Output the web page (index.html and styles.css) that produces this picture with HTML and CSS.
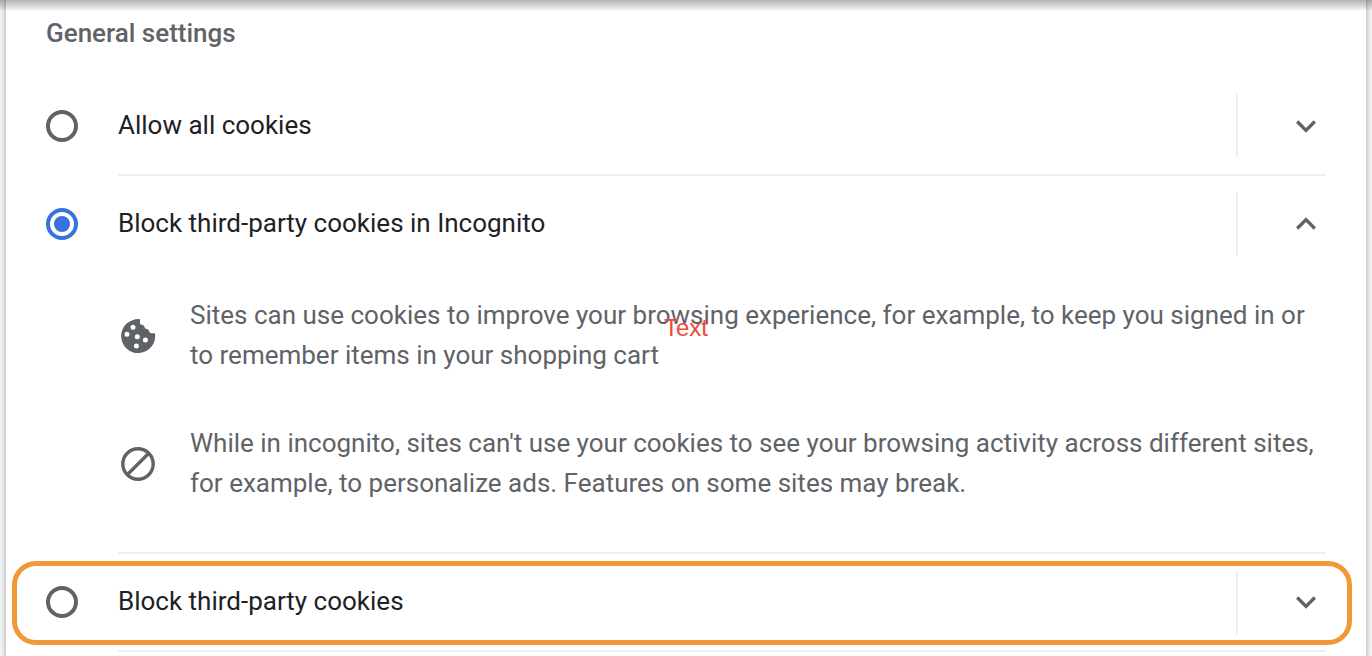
FILE: index.html
```html
<!DOCTYPE html>
<html lang="en">
<head>
<meta charset="utf-8">
<title>Cookie settings</title>
<link rel="stylesheet" href="styles.css">
</head>
<body>
<div class="scroll-shadow"></div>
<main class="card">
  <h2 class="title">General settings</h2>
  <div class="options" role="radiogroup" aria-label="General settings">
    <section class="option">
      <input class="radio" type="radio" name="cookies" id="allow">
      <div class="body">
        <div class="head">
          <label class="label" for="allow">Allow all cookies</label>
          <button class="toggle" type="button" aria-label="Expand Allow all cookies" aria-expanded="false">
            <svg class="icon" viewBox="0 0 24 24"><path d="M16.59 8.59 12 13.17 7.41 8.59 6 10l6 6 6-6z"/></svg>
          </button>
        </div>
      </div>
    </section>
    <section class="option">
      <input class="radio" type="radio" name="cookies" id="incognito" checked>
      <div class="body">
        <div class="head">
          <label class="label" for="incognito">Block third-party cookies in Incognito</label>
          <button class="toggle" type="button" aria-label="Collapse Block third-party cookies in Incognito" aria-expanded="true">
            <svg class="icon" viewBox="0 0 24 24"><path d="M12 8l-6 6 1.41 1.41L12 10.83l4.59 4.58L18 14z"/></svg>
          </button>
        </div>
        <div class="details">
          <div class="detail">
            <svg class="icon" viewBox="0 0 40 40"><path fill-rule="evenodd" d="M22 3.2A17 17 0 1 0 36.9 17.2H33.4Q31.4 17.2 31.2 15.2Q31 13.2 29 13H28.6Q26.6 12.8 26.4 10.8Q26.2 9.2 24.6 9H24Q22 8.8 22 6.8ZM15 8.8a2.5 2.5 0 1 0 0 5a2.5 2.5 0 1 0 0-5ZM9 15.8a2.5 2.5 0 1 0 0 5a2.5 2.5 0 1 0 0-5ZM19.3 18.3a2.5 2.5 0 1 0 0 5a2.5 2.5 0 1 0 0-5ZM27.4 21.5a2.5 2.5 0 1 0 0 5a2.5 2.5 0 1 0 0-5ZM18.4 27.5a2.5 2.5 0 1 0 0 5a2.5 2.5 0 1 0 0-5Z"/></svg>
            <p class="text">Sites can use cookies to improve your browsing experience, for example, to keep you signed in or to remember items in your shopping cart</p>
          </div>
          <div class="detail">
            <svg class="icon outline" viewBox="0 0 40 40"><circle cx="20" cy="20" r="15.2"/><path d="M9.5 30.5l21-21"/></svg>
            <p class="text">While in incognito, sites can't use your cookies to see your browsing activity across different sites, for example, to personalize ads. Features on some sites may break.</p>
          </div>
        </div>
      </div>
    </section>
    <section class="option">
      <input class="radio" type="radio" name="cookies" id="block">
      <div class="body">
        <div class="head">
          <label class="label" for="block">Block third-party cookies</label>
          <button class="toggle" type="button" aria-label="Expand Block third-party cookies" aria-expanded="false">
            <svg class="icon" viewBox="0 0 24 24"><path d="M16.59 8.59 12 13.17 7.41 8.59 6 10l6 6 6-6z"/></svg>
          </button>
        </div>
      </div>
      <div class="highlight"></div>
    </section>
  </div>
</main>
<div class="note">Text</div>
</body>
</html>
```
FILE: styles.css
```css
* { box-sizing: border-box; }
body {
  position: relative;
  margin: 0;
  padding: 0 6px;
  min-height: 100vh;
  background: #f1f3f4;
  color: #202124;
  font: 26px/40px Roboto, "Liberation Sans", sans-serif;
}
.scroll-shadow {
  position: absolute;
  inset: 0 0 auto;
  height: 10px;
  background: linear-gradient(rgba(0, 0, 0, .3), rgba(0, 0, 0, .05));
  z-index: 2;
}
.card {
  min-height: 100vh;
  padding: 13px 40px 0;
  background: #fff;
  box-shadow: 0 0 4px 1px rgba(60, 64, 67, .35);
}
.title {
  margin: 0 0 25px;
  color: #5f6368;
  font-size: 26px;
  font-weight: 500;
}
.option {
  position: relative;
  display: flex;
  gap: 40px;
}
.radio {
  appearance: none;
  flex: none;
  display: grid;
  place-items: center;
  width: 32px;
  height: 32px;
  margin: 32px 0 0;
  border: 4px solid #5f6368;
  border-radius: 50%;
}
.radio:checked { border-color: #3871e0; }
.radio:checked::before {
  content: "";
  width: 16px;
  height: 16px;
  border-radius: 50%;
  background: #3871e0;
}
.body {
  flex: 1;
  border-bottom: 2px solid #efefef;
}
.head {
  display: flex;
  align-items: center;
  padding: 16px 0;
}
.label {
  flex: 1;
  padding-bottom: 2px;
}
.toggle {
  height: 64px;
  padding: 0 0 0 48px;
  border: 0;
  border-left: 2px solid #efefef;
  background: none;
}
.icon {
  display: block;
  flex: none;
  width: 40px;
  height: 40px;
  fill: #5f6368;
}
.outline {
  fill: none;
  stroke: #5f6368;
  stroke-width: 3.4;
}
.details {
  display: grid;
  gap: 46px;
  padding: 23px 0 47px;
}
.detail {
  display: flex;
  align-items: center;
  gap: 32px;
  color: #5f6368;
}
.text {
  margin: 0;
  padding-bottom: 2px;
}
.highlight {
  position: absolute;
  inset: 7px -26px 7px -34px;
  border: 5px solid #f09937;
  border-radius: 24px;
  pointer-events: none;
}
.note {
  position: absolute;
  inset: 0;
  display: grid;
  place-items: center;
  color: #eb4b3c;
  font: 24px/28px "Liberation Sans", Arial, sans-serif;
  pointer-events: none;
}
```
